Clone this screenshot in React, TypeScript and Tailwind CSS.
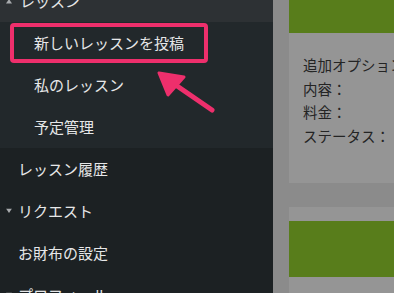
import React from 'react'

const font = { fontFamily: '"Noto Sans CJK JP", "Noto Sans", sans-serif' }

const subItems = ['新しいレッスンを投稿', '私のレッスン', '予定管理']

const Caret = () => (
  <svg width="6" height="5" viewBox="0 0 6 5" className="absolute left-[6px] top-1/2 -translate-y-1/2">
    <path d="M0 0 L6 0 L3 4.5 Z" fill="#a7aaad" />
  </svg>
)

const MenuItem = ({ label, caret }: { label: string; caret?: boolean }) => (
  <div className="relative flex h-[42px] items-center pl-[18px] text-[15px] text-[#e6e7e8]">
    {caret && <Caret />}
    {label}
  </div>
)

export default function App() {
  return (
    <div className="flex h-[293px] w-[394px] overflow-hidden" style={font}>
      {/* sidebar, scrolled down a bit */}
      <div className="relative w-[273px] shrink-0 bg-[#1c2123]">
        <div className="-mt-[20px]">
          <div className="relative flex h-[42px] items-center bg-[#2d3134] pl-[20px] text-[15px] text-[#e6e7e8]">
            <svg width="6" height="5" viewBox="0 0 6 5" className="absolute left-[6px] top-[19px]">
              <path d="M0 4.5 L6 4.5 L3 0 Z" fill="#a7aaad" />
            </svg>
            レッスン
          </div>
          <div className="bg-[#22282b]">
            {subItems.map((s, i) => (
              <div key={s} className="relative flex h-[42px] items-center pl-[34px] text-[15px] text-[#e6e7e8]">
                {s}
                {i === 0 && (
                  <span className="absolute left-[10px] top-[1px] h-[40px] w-[198px] rounded-[4px] border-4 border-[#ee2f6c]" />
                )}
              </div>
            ))}
          </div>
          <MenuItem label="レッスン履歴" />
          <MenuItem label="リクエスト" caret />
          <MenuItem label="お財布の設定" />
          <MenuItem label="プロフィール" caret />
        </div>

        {/* pointer arrow */}
        <svg width="80" height="60" viewBox="0 0 80 60" className="absolute left-[150px] top-[62px]">
          <path d="M62 48 L14 15" stroke="#ee2f6c" strokeWidth="5" strokeLinecap="round" />
          <path d="M9 11 L34 15 L18 33 Z" fill="#ee2f6c" stroke="#ee2f6c" strokeWidth="3" strokeLinejoin="round" />
        </svg>
      </div>

      {/* main, dimmed */}
      <div className="flex-1 bg-[#8b8b8b] pl-[16px]">
        <div className="w-[140px] bg-[#959595]">
          <div className="h-[33px] bg-[#587d1b]" />
          <div className="h-[150px] pl-[14px] pt-[20px] text-[14.5px] leading-[23.5px] text-[#242424] whitespace-nowrap">
            <div>追加オプション</div>
            <div>内容：</div>
            <div>料金：</div>
            <div>ステータス：</div>
          </div>
        </div>
        <div className="mt-[24px] w-[140px] bg-[#959595]">
          <div className="h-[14px]" />
          <div className="h-[56px] bg-[#587d1b]" />
          <div className="h-[40px]" />
        </div>
      </div>
    </div>
  )
}
